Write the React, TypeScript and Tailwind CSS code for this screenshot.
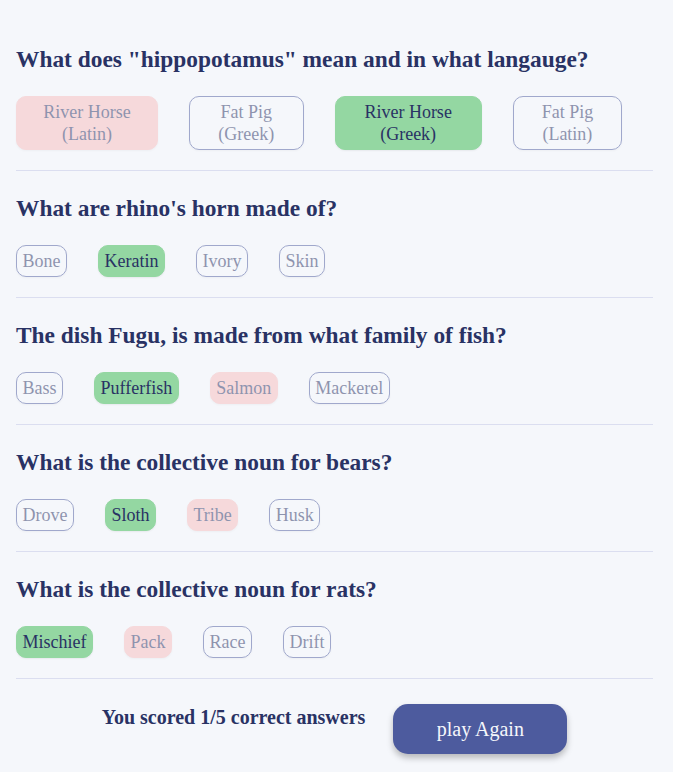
import React from "react";

type State = "neutral" | "correct" | "wrong";
type Q = { q: string; answers: { t: string; s: State }[] };

const questions: Q[] = [
  {
    q: 'What does "hippopotamus" mean and in what langauge?',
    answers: [
      { t: "River Horse (Latin)", s: "wrong" },
      { t: "Fat Pig (Greek)", s: "neutral" },
      { t: "River Horse (Greek)", s: "correct" },
      { t: "Fat Pig (Latin)", s: "neutral" },
    ],
  },
  {
    q: "What are rhino's horn made of?",
    answers: [
      { t: "Bone", s: "neutral" },
      { t: "Keratin", s: "correct" },
      { t: "Ivory", s: "neutral" },
      { t: "Skin", s: "neutral" },
    ],
  },
  {
    q: "The dish Fugu, is made from what family of fish?",
    answers: [
      { t: "Bass", s: "neutral" },
      { t: "Pufferfish", s: "correct" },
      { t: "Salmon", s: "wrong" },
      { t: "Mackerel", s: "neutral" },
    ],
  },
  {
    q: "What is the collective noun for bears?",
    answers: [
      { t: "Drove", s: "neutral" },
      { t: "Sloth", s: "correct" },
      { t: "Tribe", s: "wrong" },
      { t: "Husk", s: "neutral" },
    ],
  },
  {
    q: "What is the collective noun for rats?",
    answers: [
      { t: "Mischief", s: "correct" },
      { t: "Pack", s: "wrong" },
      { t: "Race", s: "neutral" },
      { t: "Drift", s: "neutral" },
    ],
  },
];

function Answer({ t, s }: { t: string; s: State }) {
  const base =
    "mr-[31px] px-[5.5px] py-[4px] rounded-[10px] text-[18px] leading-[22px] border shadow-[0_1px_2px_rgba(0,0,0,0.06)]";
  if (s === "correct")
    return <button className={`${base} bg-[#94D7A2] border-[#94D7A2] text-[#293264]`}>{t}</button>;
  if (s === "wrong")
    return (
      <button className={`${base} bg-[#F8BCBC] border-[#F8BCBC] text-[#293264] opacity-50`}>{t}</button>
    );
  return (
    <button className={`${base} bg-transparent border-[#4D5B9E] text-[#293264] opacity-50`}>{t}</button>
  );
}

export default function App() {
  return (
    <div
      className="min-h-[772px] bg-[#F5F7FB] text-[#293264] pl-4 pr-[20px] pt-[46px]"
      style={{ fontFamily: '"Liberation Serif", "Times New Roman", serif' }}
    >
      {questions.map((q, i) => (
        <div key={i} className={i === 0 ? "" : "pt-[24px]"}>
          <h2 className="text-[23.4px] leading-[27px] font-bold">{q.q}</h2>
          <div className="flex mt-[23px]">
            {q.answers.map((a, j) => (
              <Answer key={j} t={a.t} s={a.s} />
            ))}
          </div>
          <div className="mt-[20px] border-b border-[#DBDEF0]" />
        </div>
      ))}
      <div className="flex justify-center items-start gap-[28px] pt-[25px]">
        <p className="mt-[1.5px] text-[20px] leading-[23px] font-bold">You scored 1/5 correct answers</p>
        <button className="w-[174px] h-[50px] rounded-[15px] bg-[#4D5B9E] text-[#F5F7FB] text-[20px] shadow-[0_4px_6px_rgba(0,0,0,0.25)]">
          play Again
        </button>
      </div>
    </div>
  );
}
